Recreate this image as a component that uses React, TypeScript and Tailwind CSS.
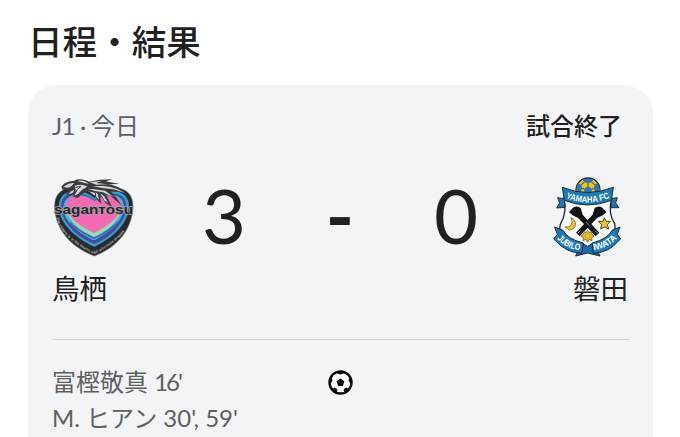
import type { ReactNode } from "react";

interface Goal {
  name: string;
  minutes: string;
  tight?: boolean;
}

const goals: Goal[] = [
  { name: "富樫敬真", minutes: "16'", tight: true },
  { name: "M. ヒアン", minutes: "30', 59'" },
];

function SaganTosuCrest() {
  return (
    <svg className="h-[79px] w-[81px]" viewBox="24 24 243 237">
      <defs>
        <path id="tosu-motto" d="M34 143 C46 191 92 226 148 253 C200 226 248 191 261 140" />
      </defs>
      {/* Shield */}
      <path
        d="M148 258 C90 236 30 188 29 108 C29 66 58 52 90 53 C112 54 132 62 148 76 C163 62 184 53 207 53 C240 54 264 70 264 108 C262 188 205 237 148 258Z"
        fill="#292a2d"
        stroke="#77787b"
        strokeWidth="2"
      />
      <path
        d="M148 230 C96 207 43 163 41 111 C41 76 65 62 91 63 C115 64 132 70 148 84 C164 71 182 63 208 64 C235 65 253 83 252 111 C249 164 198 208 148 230Z"
        fill="#2f9fcd"
      />
      <path
        d="M147 221 C105 205 55 164 49 119 C45 82 66 69 92 70 C117 71 132 78 148 90 C166 75 184 70 208 71 C233 73 247 91 244 116 C238 163 190 207 147 221Z"
        fill="#4c4796"
      />
      <path
        d="M147 211 C104 192 62 158 55 122 C52 90 71 74 97 75 C119 76 135 82 148 94 C165 80 181 75 206 76 C229 78 239 96 236 119 C231 157 188 192 147 211Z"
        fill="#3db9dc"
      />
      <path
        d="M147 201 C108 184 70 153 63 121 C60 94 77 79 101 79 C122 80 137 87 148 99 C165 84 181 79 204 80 C223 82 232 99 229 119 C224 150 186 184 147 201Z"
        fill="#9bd8b8"
      />
      <path
        d="M147 189 C110 171 73 147 64 116 C58 90 77 76 101 77 C122 78 138 83 150 94 C165 82 182 75 205 78 C223 81 231 97 228 115 C221 146 182 173 147 189Z"
        fill="#f06bb4"
      />
      <path d="M75 157 C94 181 124 194 147 205 C169 195 201 178 221 154" fill="none" stroke="#3f64b0" strokeWidth="5" />
      <text fill="#b9babb" fontSize="11" fontWeight="700" fontFamily="Liberation Sans, sans-serif">
        <textPath href="#tosu-motto" textLength="278">
          The victory is in the hearts of all who have dreams
        </textPath>
      </text>

      {/* Bird */}
      <path
        d="M49 50 C56 39 72 33 88 32 C98 25 120 27 132 35 L165 29 L203 28 L182 34 L224 42 L189 43 C216 47 238 59 250 78 L227 67 L197 64 L213 82 L232 108 L200 81 L180 68 L202 112 L181 98 L164 73 L169 102 L157 90 L148 68 L128 64 L110 72 L99 84 L85 81 L86 72 L71 77 L62 72 L75 61 L53 59Z"
        fill="#3b3b3e"
      />
      <g fill="#d6d8d9">
        <path d="M55 51 C64 43 77 38 88 39 L79 49 L69 53Z" />
        <path d="M89 47 C101 42 117 43 127 50 L113 58 L99 72 L89 77 L93 65Z" />
        <path d="M97 33 C112 29 124 35 132 42 L116 38Z" />
        <path d="M134 37 L170 32 L153 39 L188 43 L155 44Z" />
        <path d="M142 48 L174 48 C200 50 222 57 238 68 L206 58 L171 54Z" />
        <path d="M128 56 L148 58 L180 62 L207 82 L174 67 L150 63Z" />
        <path d="M165 69 L177 79 L190 99 L178 91Z" />
        <path d="M152 67 L158 73 L162 89 L154 80Z" />
        <path d="M79 64 L88 59 L83 69 L69 73Z" />
      </g>
      <path d="M91 52 L108 49 L97 58 L91 70" fill="none" stroke="#3b3b3e" strokeWidth="3" />

      <text
        x="27"
        y="133"
        textLength="237"
        lengthAdjust="spacingAndGlyphs"
        fill="#27252a"
        stroke="#a7a3a9"
        strokeWidth="4"
        paintOrder="stroke"
        fontSize="39"
        fontWeight="700"
        fontFamily="Liberation Sans, sans-serif"
      >
        saganтosu
      </text>
    </svg>
  );
}

function JubiloCrest() {
  return (
    <svg className="h-20 w-[68px]" viewBox="24 21 204 240">
      <defs>
        <path id="iwata-top" d="M62 84 Q128 111 196 83" />
        <path id="iwata-left" d="M35 205 Q62 237 108 241" />
        <path id="iwata-right" d="M146 241 Q190 234 217 204" />
      </defs>
      {/* Ball */}
      <circle cx="129" cy="60" r="36" fill="#f2c324" stroke="#222b36" strokeWidth="4" />
      <path
        d="M112 27 L146 27 L140 37 L129 40 L118 37Z M95 59 L99 40 L109 44 L112 56 L104 68Z M149 44 L158 39 L165 60 L154 68 L146 56Z M117 57 L129 47 L141 57 L138 70 L119 70Z"
        fill="#2879b5"
      />
      <path d="M118 37 L109 44 M140 37 L149 44 M112 56 H117 M141 57 H146 M129 40 V47" stroke="#29343e" strokeWidth="3" />

      {/* Shield */}
      <path
        d="M56 86 Q127 112 201 86 C192 112 194 137 209 161 C216 190 189 217 150 229 L128 244 L106 229 C65 219 38 190 46 163 C61 136 65 113 56 86Z"
        fill="#f8fafb"
        stroke="#202329"
        strokeWidth="4"
      />
      <path
        d="M38 83 L58 86 L60 112 L35 114 L44 99Z M198 86 L217 83 L212 99 L222 113 L198 113Z"
        fill="#1d75b4"
        stroke="#202b38"
        strokeWidth="3"
      />
      <path d="M52 52 Q127 83 205 52 L199 91 Q127 119 58 91Z" fill="#1c79ba" stroke="#1d2a37" strokeWidth="3" />

      {/* Crossed birds */}
      <g fill="#111318">
        <path d="M72 127 L84 113 Q96 105 107 114 L113 134 L163 188 L152 199 L99 143 L85 137Z" />
        <path d="M184 127 L172 113 Q160 105 149 114 L143 134 L93 188 L104 199 L157 143 L171 137Z" />
      </g>
      <path d="M150 182 L158 190 M98 190 L106 182 M123 157 L133 167" stroke="#e6e8ea" strokeWidth="2" />

      <path
        d="M77 143 C98 149 96 179 73 180 L60 171 Q80 173 81 155 Q81 148 77 143Z"
        fill="#f3c51c"
        stroke="#5d5330"
        strokeWidth="2"
      />
      <path
        d="M178 143 L183 154 L196 154 L187 164 L191 177 L179 171 L167 177 L170 164 L160 154 L174 154Z"
        fill="#f3c51c"
        stroke="#51472b"
        strokeWidth="3"
      />
      <path
        d="M128 181 L132 188 L141 184 L140 193 L148 198 L140 203 L141 212 L132 208 L128 217 L123 208 L114 212 L115 203 L107 198 L115 193 L114 184 L123 188Z"
        fill="#eabd18"
        stroke="#51472b"
        strokeWidth="2"
      />
      <circle cx="128" cy="198" r="7" fill="#f3c72b" stroke="#7a6430" />

      {/* Ribbon */}
      <path d="M110 219 L128 229 L146 219 L165 258 L128 249 L92 258Z" fill="#176dac" stroke="#202b38" strokeWidth="3" />
      <path d="M29 171 L54 181 Q67 207 115 219 L110 250 Q63 248 34 214 L26 207 L37 193Z" fill="#1c79ba" stroke="#202b38" strokeWidth="3" />
      <path d="M225 171 L201 181 Q189 207 141 219 L145 250 Q194 247 219 214 L227 207 L217 193Z" fill="#1c79ba" stroke="#202b38" strokeWidth="3" />

      <g fill="#fff" fontWeight="700" fontFamily="Liberation Sans, sans-serif">
        <text fontSize="26">
          <textPath href="#iwata-top" textLength="136" lengthAdjust="spacingAndGlyphs">
            YAMAHA FC
          </textPath>
        </text>
        <text fontSize="27">
          <textPath href="#iwata-left" textLength="80" lengthAdjust="spacingAndGlyphs">
            JUBILO
          </textPath>
        </text>
        <text fontSize="27">
          <textPath href="#iwata-right" textLength="80" lengthAdjust="spacingAndGlyphs">
            IWATA
          </textPath>
        </text>
      </g>
    </svg>
  );
}

function SoccerBall() {
  return (
    <svg className="h-[25px] w-[25px]" viewBox="0 0 25 25">
      <circle cx="12.5" cy="12.5" r="11" fill="#fff" stroke="#080808" strokeWidth="2.4" />
      <path
        d="M12.5 8.5 L16.4 11.3 L14.9 15.9 H10.1 L8.6 11.3Z M8.5 2 H16.5 L15 3.8 L12.5 4.4 L10 3.8Z M2 8.5 L3.9 8.3 L4.5 10.6 L3.3 12.8 L1.6 13Z M23 8.5 L21.1 8.3 L20.5 10.6 L21.7 12.8 L23.4 13Z M4.9 19.2 L6 17.6 L8.5 18.4 L9.4 20.8 L8.6 22.8Z M20.1 19.2 L19 17.6 L16.5 18.4 L15.6 20.8 L16.4 22.8Z"
        fill="#080808"
      />
    </svg>
  );
}

function Score({ children }: { children: ReactNode }) {
  return <span className="flex w-[116px] justify-center">{children}</span>;
}

export default function App() {
  return (
    <main className="h-[437px] overflow-hidden bg-white px-7 pt-[15px] font-['Lato','Noto_Sans_CJK_JP',sans-serif] text-[#1f2020]">
      <h1 className="h-[70px] font-['Noto_Sans_CJK_JP',sans-serif] text-[34.6px] leading-[51px] font-medium">
        日程・結果
      </h1>

      <section className="h-[380px] w-[625px] rounded-[28px] bg-[#f3f4f6] px-6 pt-[23px]">
        <div className="flex h-9 items-center justify-between pr-[7px] text-2xl leading-9">
          <span className="text-[#5e5f61]">
            <span className="tracking-[-0.7px]">J1 · </span>今日
          </span>
          <span className="font-medium">試合終了</span>
        </div>

        <div className="mt-[33px] flex h-20 items-center justify-between pr-2 pl-px">
          <SaganTosuCrest />
          <div className="mr-[7px] flex items-center pb-1 text-[76px] leading-none">
            <Score>3</Score>
            <Score>
              <span className="pb-px font-bold">-</span>
            </Score>
            <Score>0</Score>
          </div>
          <JubiloCrest />
        </div>

        <div className="mt-[11px] flex justify-between pr-px text-[27.5px] leading-[42px]">
          <span>鳥栖</span>
          <span>磐田</span>
        </div>

        <div className="mt-[29px] flex justify-between border-t border-[#d2d4d6] pt-6">
          <div className="w-[276px] text-2xl leading-9 text-[#5e5f61]">
            {goals.map((goal) => (
              <p key={goal.name}>
                {goal.name}{" "}
                <span className={goal.tight ? "tracking-[-2px]" : ""}>{goal.minutes}</span>
              </p>
            ))}
          </div>
          <div className="pt-[6px]">
            <SoccerBall />
          </div>
          <div className="w-[276px]" />
        </div>
      </section>
    </main>
  );
}
